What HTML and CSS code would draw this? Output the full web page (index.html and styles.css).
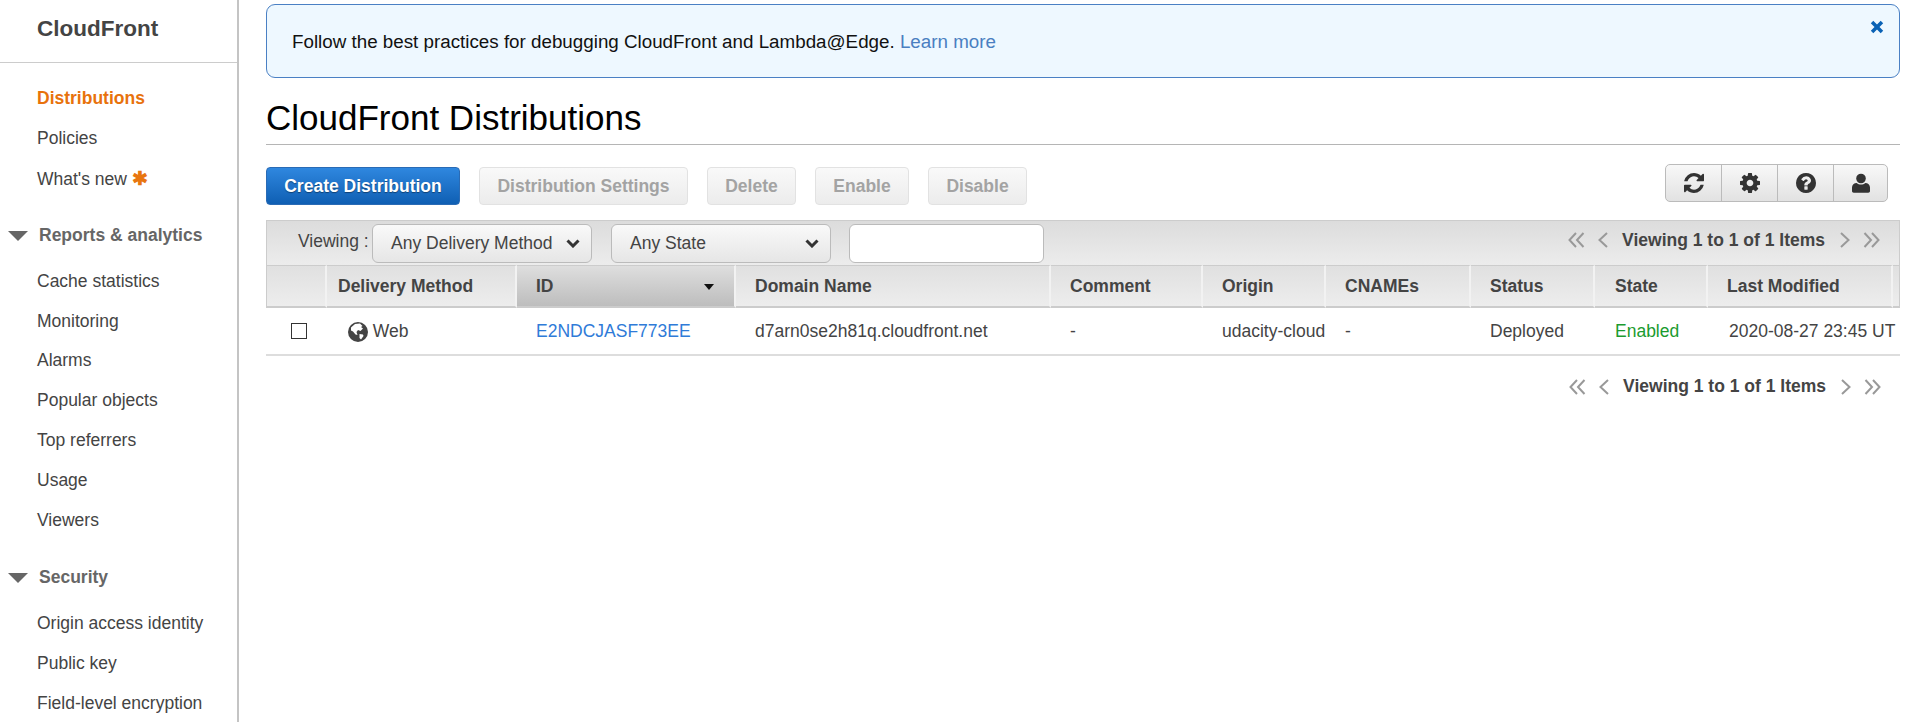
FILE: index.html
```html
<!DOCTYPE html>
<html lang="en">
<head>
    <meta charset="UTF-8">
    <title>CloudFront Distributions</title>
    <link rel="stylesheet" href="styles.css">
</head>
<body>
<div class="page">

    <!-- left nav -->
    <nav class="sidebar">
        <div class="brand">CloudFront</div>
        <ul class="nav-list first">
            <li class="active">Distributions</li>
            <li>Policies</li>
            <li>What's new <span class="star">&#10033;</span></li>
        </ul>
        <div class="nav-head"><span class="caret"></span>Reports &amp; analytics</div>
        <ul class="nav-list">
            <li>Cache statistics</li>
            <li>Monitoring</li>
            <li>Alarms</li>
            <li>Popular objects</li>
            <li>Top referrers</li>
            <li>Usage</li>
            <li>Viewers</li>
        </ul>
        <div class="nav-head"><span class="caret"></span>Security</div>
        <ul class="nav-list">
            <li>Origin access identity</li>
            <li>Public key</li>
            <li>Field-level encryption</li>
        </ul>
    </nav>

    <main class="content">
        <div class="banner">
            <p>Follow the best practices for debugging CloudFront and Lambda@Edge. <a href="#">Learn more</a></p>
            <svg class="banner-close" viewBox="0 0 14 14"><path d="M2.5 5 L0.8 3.3 L3.3 0.8 L7 4.5 L10.7 0.8 L13.2 3.3 L9.5 7 L13.2 10.7 L10.7 13.2 L7 9.5 L3.3 13.2 L0.8 10.7 L4.5 7 Z" fill="#0a62b5"/></svg>
        </div>

        <h1 class="title">CloudFront Distributions</h1>

        <div class="actions">
            <button class="btn primary">Create Distribution</button>
            <button class="btn w-settings">Distribution Settings</button>
            <button class="btn w-delete">Delete</button>
            <button class="btn w-enable">Enable</button>
            <button class="btn w-disable">Disable</button>
            <div class="icon-group">
                <span class="icon-btn">
                    <svg viewBox="0 0 1536 1536" width="20" height="20"><path d="M1511 928q0 5-1 7-64 268-268 434.5t-478 166.5q-146 0-282.5-55t-243.5-157l-129 129q-19 19-45 19t-45-19-19-45v-448q0-26 19-45t45-19h448q26 0 45 19t19 45-19 45l-137 137q71 66 161 102t187 36q134 0 250-65t186-179q11-17 53-117 8-23 30-23h192q13 0 22.5 9.5t9.5 22.5zm25-800v448q0 26-19 45t-45 19h-448q-26 0-45-19t-19-45 19-45l138-138q-148-137-349-137-134 0-250 65t-186 179q-11 17-53 117-8 23-30 23h-199q-13 0-22.5-9.5t-9.5-22.5v-7q65-268 270-434.5t480-166.5q146 0 284 55.5t245 156.5l130-129q19-19 45-19t45 19 19 45z" fill="#333"/></svg>
                </span>
                <span class="icon-btn">
                    <svg viewBox="0 0 1536 1536" width="20" height="20"><path transform="translate(0 128)" d="M1024 640q0-106-75-181t-181-75-181 75-75 181 75 181 181 75 181-75 75-181zm512-109v222q0 12-8 23t-20 13l-185 28q-19 54-39 91 35 50 107 138 10 12 10 25t-9 23q-27 37-99 108t-94 71q-12 0-26-9l-138-108q-44 23-91 38-16 136-29 186-7 28-36 28h-222q-14 0-24.5-8.5t-11.5-21.5l-28-184q-49-16-90-37l-141 107q-10 9-25 9-14 0-25-11-126-114-165-168-7-10-7-23 0-12 8-23 15-21 51-66.5t54-70.5q-27-50-41-99l-183-27q-13-2-21-12.5t-8-23.5v-222q0-12 8-23t19-13l186-28q14-46 39-92-40-57-107-138-10-12-10-24 0-10 9-23 26-36 98.5-107.5t94.5-71.5q13 0 26 10l138 107q44-23 91-38 16-136 29-186 7-28 36-28h222q14 0 24.5 8.5t11.5 21.5l28 184q49 16 90 37l142-107q9-9 24-9 13 0 25 10 129 119 165 170 7 8 7 22 0 12-8 23-15 21-51 66.5t-54 70.5q26 50 41 98l183 28q13 2 21 12.5t8 23.5z" fill="#333"/></svg>
                </span>
                <span class="icon-btn">
                    <svg viewBox="0 128 1536 1536" width="20" height="20"><path d="M896 1376v-192q0-14-9-23t-23-9h-192q-14 0-23 9t-9 23v192q0 14 9 23t23 9h192q14 0 23-9t9-23zm256-672q0-88-55.5-163t-138.5-116-170-41q-243 0-371 213-15 24 8 42l132 100q7 6 19 6 16 0 25-12 53-68 86-92 34-24 86-24 48 0 85.5 26t37.5 59q0 38-20 61t-68 45q-63 28-115.5 86.5t-52.5 125.5v36q0 14 9 23t23 9h192q14 0 23-9t9-23q0-19 21.5-49.5t54.5-49.5q32-18 49-28.5t46-35 44.5-48 28-60.5 12.5-81zm384 192q0 209-103 385.5t-279.5 279.5-385.5 103-385.5-103-279.5-279.5-103-385.5 103-385.5 279.5-279.5 385.5-103 385.5 103 279.5 279.5 103 385.5z" fill="#333"/></svg>
                </span>
                <span class="icon-btn">
                    <svg viewBox="0 0 20 20" width="20" height="20"><circle cx="10" cy="5.5" r="4.8" fill="#333"/><path d="M1 18v-3.5c0-2.600 2-4.500 4.800-4.500 1 1 2.600 1.600 4.200 1.600s3.200-.6 4.200-1.600c2.800 0 4.800 1.900 4.800 4.500V18c0 1-.8 1.700-1.700 1.700H2.700C1.800 19.700 1 19 1 18z" fill="#333"/></svg>
                </span>
            </div>
        </div>

        <div class="grid-wrap">
            <div class="filter-bar">
                <span class="filter-label">Viewing :</span>
                <div class="select w-method">Any Delivery Method
                    <svg class="chev" viewBox="0 0 14 9"><path d="M1.5 1.5 L7 7 L12.5 1.5" fill="none" stroke="#333" stroke-width="3"/></svg>
                </div>
                <div class="select w-state">Any State
                    <svg class="chev" viewBox="0 0 14 9"><path d="M1.5 1.5 L7 7 L12.5 1.5" fill="none" stroke="#333" stroke-width="3"/></svg>
                </div>
                <input class="search" type="text">
                <div class="pager">
                    <svg class="arrow" viewBox="0 0 17 16"><path d="M8 1 L1.5 8 L8 15 M15.5 1 L9 8 L15.5 15" fill="none" stroke="#999" stroke-width="2"/></svg>
                    <svg class="arrow small" viewBox="0 0 10 16"><path d="M9 1 L1.5 8 L9 15" fill="none" stroke="#999" stroke-width="2"/></svg>
                    <strong>Viewing 1 to 1 of 1 Items</strong>
                    <svg class="arrow small" viewBox="0 0 10 16"><path d="M1 1 L8.5 8 L1 15" fill="none" stroke="#999" stroke-width="2"/></svg>
                    <svg class="arrow" viewBox="0 0 17 16"><path d="M1.5 1 L8 8 L1.5 15 M9 1 L15.5 8 L9 15" fill="none" stroke="#999" stroke-width="2"/></svg>
                </div>
            </div>

            <table class="grid">
                <colgroup>
                    <col class="c-check"><col class="c-method"><col class="c-id"><col class="c-domain"><col class="c-comment">
                    <col class="c-origin"><col class="c-cnames"><col class="c-status"><col class="c-state"><col class="c-modified"><col class="c-end">
                </colgroup>
                <thead>
                    <tr>
                        <th></th>
                        <th>Delivery Method</th>
                        <th class="sorted">ID<span class="sort-caret"></span></th>
                        <th>Domain Name</th>
                        <th>Comment</th>
                        <th>Origin</th>
                        <th>CNAMEs</th>
                        <th>Status</th>
                        <th class="state-head">State</th>
                        <th>Last Modified</th>
                        <th></th>
                    </tr>
                </thead>
                <tbody>
                    <tr>
                        <td class="check-cell"><span class="checkbox"></span></td>
                        <td class="method-cell">
                            <svg class="globe" viewBox="0 0 20 20"><circle cx="10" cy="10" r="10" fill="#444"/><path d="M3 5.500 L7 2 L12 1.500 L14.500 4 L13 5 L15 6.500 L12.500 9 L10 8 L8.500 10 L9.500 13 L7.500 12.500 L5 9.500 L3 8.500 Z M11.500 12 L15 12.500 L15.500 14 L13 17.500 L11.500 16 Z" fill="#fff"/></svg>
                            Web
                        </td>
                        <td><a class="id-link" href="#">E2NDCJASF773EE</a></td>
                        <td>d7arn0se2h81q.cloudfront.net</td>
                        <td>-</td>
                        <td>udacity-cloud</td>
                        <td>-</td>
                        <td>Deployed</td>
                        <td class="enabled">Enabled</td>
                        <td class="modified-cell" colspan="2">2020-08-27 23:45 UT</td>
                    </tr>
                </tbody>
            </table>

            <div class="pager bottom">
                <svg class="arrow" viewBox="0 0 17 16"><path d="M8 1 L1.5 8 L8 15 M15.5 1 L9 8 L15.5 15" fill="none" stroke="#999" stroke-width="2"/></svg>
                <svg class="arrow small" viewBox="0 0 10 16"><path d="M9 1 L1.5 8 L9 15" fill="none" stroke="#999" stroke-width="2"/></svg>
                <strong>Viewing 1 to 1 of 1 Items</strong>
                <svg class="arrow small" viewBox="0 0 10 16"><path d="M1 1 L8.5 8 L1 15" fill="none" stroke="#999" stroke-width="2"/></svg>
                <svg class="arrow" viewBox="0 0 17 16"><path d="M1.5 1 L8 8 L1.5 15 M9 1 L15.5 8 L9 15" fill="none" stroke="#999" stroke-width="2"/></svg>
            </div>
        </div>
    </main>
</div>
</body>
</html>
```

FILE: styles.css
```css
html, body {
    margin: 0;
    height: 722px;
    overflow: hidden;
    background: #fff;
}
body {
    font-family: "Liberation Sans", Arial, sans-serif;
    font-size: 17.5px;
    color: #444;
}
.page {
    display: flex;
    height: 722px;
}

/* sidebar */
.sidebar {
    width: 237px;
    flex: none;
    border-right: 2px solid #c4c4c4;
    overflow: hidden;
}
.brand {
    height: 62px;
    line-height: 58px;
    padding-left: 37px;
    font-size: 22.5px;
    font-weight: bold;
    color: #444;
    border-bottom: 1px solid #ccc;
}
.nav-list {
    list-style: none;
    margin: 0;
    padding: 0 0 0 37px;
}
.nav-list.first {
    margin-top: 16px;
}
.nav-list li {
    height: 39.9px;
    line-height: 39.9px;
    white-space: nowrap;
}
.nav-list li.active {
    color: #e8720c;
    font-weight: bold;
}
.star {
    color: #e8760f;
    font-size: 19px;
    font-weight: bold;
}
.nav-head {
    display: flex;
    align-items: center;
    height: 40px;
    margin-top: 17px;
    margin-bottom: 6px;
    padding-left: 8px;
    font-weight: bold;
    color: #666;
}
.caret {
    width: 0;
    height: 0;
    margin-right: 11px;
    border-left: 10px solid transparent;
    border-right: 10px solid transparent;
    border-top: 10px solid #666;
}

/* main column */
.content {
    flex: 1;
    min-width: 0;
    padding: 4px 7px 0 27px;
}
.banner {
    position: relative;
    box-sizing: border-box;
    height: 74px;
    background: #eef8ff;
    border: 1px solid #4a80c4;
    border-radius: 9px;
    padding: 0 25px;
    color: #111;
    font-size: 18.8px;
    line-height: 73px;
}
.banner p {
    margin: 0;
}
.banner a {
    color: #4a7fc1;
    text-decoration: none;
}
.banner-close {
    position: absolute;
    top: 15px;
    right: 15px;
    width: 14px;
    height: 14px;
}
.title {
    margin: 19px 0 0;
    height: 47px;
    line-height: 41px;
    font-size: 35px;
    font-weight: normal;
    color: #000;
    border-bottom: 1px solid #b5b5b5;
}

/* button row */
.actions {
    display: flex;
    align-items: flex-start;
    gap: 19px;
    margin-top: 22px;
    padding-right: 12px;
}
.btn {
    height: 38px;
    padding: 0;
    box-sizing: border-box;
    border: 1px solid #e2e2e2;
    border-radius: 4px;
    background: linear-gradient(#f9f9f9, #ececec);
    color: #a3a3a3;
    font: bold 17.5px "Liberation Sans", Arial, sans-serif;
}
.btn.primary {
    width: 194px;
    border-color: #2a6bb5;
    background: linear-gradient(#2f87df, #0f5fb3);
    color: #fff;
    text-shadow: 0 1px 1px rgba(0,0,0,0.4);
}
.w-settings { width: 209px; }
.w-delete { width: 89px; }
.w-enable { width: 94px; }
.w-disable { width: 99px; }
.icon-group {
    display: flex;
    box-sizing: border-box;
    width: 223px;
    height: 38px;
    margin-left: auto;
    margin-top: -3px;
    border: 1px solid #bbb;
    border-radius: 5px;
    background: linear-gradient(#f8f8f8, #e2e2e2);
}
.icon-btn {
    display: flex;
    flex: none;
    box-sizing: border-box;
    width: 56px;
    align-items: center;
    justify-content: center;
    border-left: 1px solid #bbb;
}
.icon-btn:first-child {
    width: 55px;
    border-left: none;
}
.icon-btn:last-child {
    width: 54px;
}

/* table */
.grid-wrap {
    margin-top: 15px;
}
.filter-bar {
    display: flex;
    align-items: center;
    box-sizing: border-box;
    height: 45px;
    border: 1px solid #ccc;
    border-bottom: none;
    background: linear-gradient(#dcdcdc, #ececec);
}
.filter-label {
    width: 105px;
    margin-top: -4px;
    padding-left: 31px;
    box-sizing: border-box;
}
.select {
    display: flex;
    align-items: center;
    justify-content: space-between;
    box-sizing: border-box;
    height: 39px;
    padding: 0 11px 0 18px;
    border: 1px solid #bbb;
    border-radius: 6px;
    background: linear-gradient(#f9f9f9, #e6e6e6);
}
.w-method {
    width: 220px;
}
.w-state {
    width: 220px;
    margin-left: 19px;
}
.chev {
    width: 14px;
    height: 9px;
}
.search {
    box-sizing: border-box;
    width: 195px;
    height: 39px;
    margin-left: 18px;
    border: 1px solid #bbb;
    border-radius: 6px;
    background: #fff;
}
.pager {
    display: flex;
    align-items: center;
    margin-left: auto;
    margin-top: -6px;
    padding-right: 19px;
    color: #444;
}
.pager strong {
    margin: 0 15px 0 14px;
}
.pager.bottom {
    justify-content: flex-end;
    margin-top: 20px;
}
.arrow {
    width: 17px;
    height: 16px;
    margin-right: 13px;
}
.arrow.small {
    width: 10px;
    margin-right: 0;
}
.pager strong + .arrow {
    margin-right: 13px;
}
.pager strong + .arrow + .arrow {
    margin-right: 0;
}

.grid {
    width: 100%;
    table-layout: fixed;
    border-collapse: separate;
    border-spacing: 0;
}
.c-check { width: 61px; }
.c-method { width: 190px; }
.c-id { width: 219px; }
.c-domain { width: 315px; }
.c-comment { width: 152px; }
.c-origin { width: 123px; }
.c-cnames { width: 145px; }
.c-status { width: 124px; }
.c-state { width: 113px; }
.c-modified { width: 185px; }
.grid th {
    height: 43px;
    padding: 0 0 0 19px;
    box-sizing: border-box;
    text-align: left;
    font-size: 17.5px;
    color: #444;
    background: linear-gradient(#e0e0e0, #ededed);
    border-top: 1px solid #ccc;
    border-bottom: 2px solid #ccc;
    border-right: 2px solid #f2f2f2;
    white-space: nowrap;
}
.grid th:first-child {
    border-left: 1px solid #ccc;
}
.grid th:nth-child(2) {
    padding-left: 11px;
}
.grid th.state-head {
    padding-left: 20px;
}
.grid th:last-child {
    border-right: 1px solid #ccc;
}
.grid th.sorted {
    position: relative;
    background: linear-gradient(#dedede, #bdbdbd);
}
.sort-caret {
    position: absolute;
    right: 20px;
    top: 18px;
    border-left: 5px solid transparent;
    border-right: 5px solid transparent;
    border-top: 6px solid #111;
}
.grid td {
    height: 48px;
    padding: 0 0 0 19px;
    box-sizing: border-box;
    white-space: nowrap;
    vertical-align: middle;
    border-bottom: 2px solid #ddd;
}
.grid td.check-cell {
    padding-left: 25px;
}
.checkbox {
    display: block;
    width: 16px;
    height: 16px;
    box-sizing: border-box;
    border: 1px solid #333;
}
.grid td.method-cell {
    padding-left: 21px;
}
.globe {
    width: 20px;
    height: 20px;
    vertical-align: -5px;
}
.id-link {
    color: #2f7bd8;
    text-decoration: none;
}
.grid td.enabled {
    padding-left: 20px;
    color: #1b9b2f;
}
.grid td.modified-cell {
    padding-left: 21px;
}
```
